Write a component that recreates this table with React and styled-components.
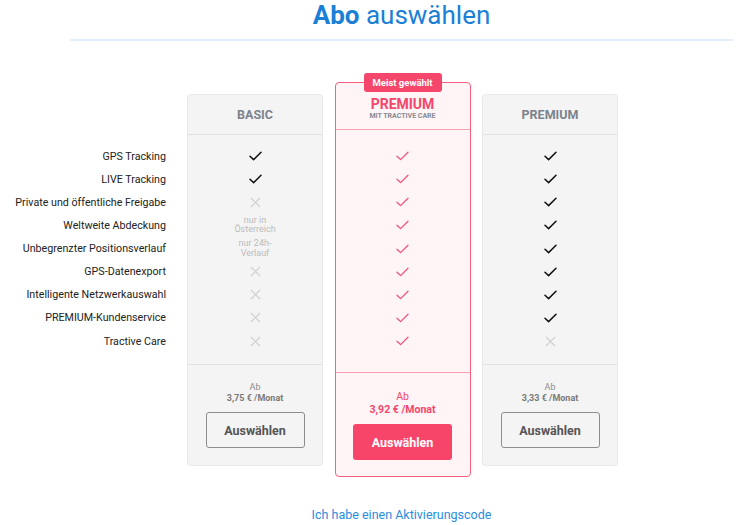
import React from "react";
import styled, { createGlobalStyle, css } from "styled-components";

const Global = createGlobalStyle`
  html, body { margin: 0; padding: 0; background: #fff; }
  body { font-family: Roboto, "Liberation Sans", Arial, sans-serif; -webkit-font-smoothing: antialiased; }
  * { box-sizing: border-box; }
`;

const Page = styled.div`
  width: 738px;
  height: 525px;
  overflow: hidden;
`;

const Head = styled.header`
  margin-left: 70px;
  width: 663px;
  text-align: center;
`;

const Title = styled.h1`
  margin: 0;
  font-size: 26px;
  line-height: 30px;
  font-weight: 400;
  color: #1a80d6;
  b { font-weight: 700; }
`;

const Rule = styled.div`
  margin-top: 9px;
  height: 2px;
  background: #e3effa;
`;

const Main = styled.main`
  display: flex;
  align-items: flex-start;
  gap: 21px;
  margin-top: 41px;
`;

const Labels = styled.ul`
  list-style: none;
  margin: 0;
  padding: 62.5px 0 0;
  width: 166px;
`;

const Row = styled.li`
  height: 23.125px;
  display: flex;
  align-items: center;
  justify-content: ${(p) => (p.$label ? "flex-end" : "center")};
  font-size: 10.7px;
  color: #222;
  white-space: nowrap;
`;

const Cards = styled.div`
  display: flex;
  align-items: flex-start;
  gap: 11.5px;
`;

const Card = styled.section`
  position: relative;
  width: 136px;
  border-radius: 4px;
  display: flex;
  flex-direction: column;
  ${(p) =>
    p.$hot
      ? css`
          height: 395px;
          background: #fff4f6;
          border: 1px solid #f85f7e;
        `
      : css`
          height: 372px;
          margin-top: 12px;
          background: #f4f4f4;
          border: 1px solid #e9e9e9;
        `}
`;

const Badge = styled.div`
  position: absolute;
  top: -10px;
  left: 50%;
  transform: translateX(-50%);
  width: 78px;
  height: 19px;
  border-radius: 3px;
  background: #f5466b;
  color: #fff;
  font-size: 9.5px;
  font-weight: 700;
  line-height: 19px;
  text-align: center;
  white-space: nowrap;
`;

const CardHead = styled.div`
  text-align: center;
  ${(p) =>
    p.$hot
      ? css`
          height: 47px;
          padding-top: 13.5px;
          border-bottom: 1px solid #f6a0b1;
        `
      : css`
          height: 40px;
          border-bottom: 1px solid #e2e2e2;
          display: flex;
          align-items: center;
          justify-content: center;
        `}
`;

const PlanName = styled.div`
  font-weight: 700;
  ${(p) =>
    p.$hot
      ? css`
          font-size: 14px;
          line-height: 15px;
          color: #f5466b;
        `
      : css`
          font-size: 12.5px;
          line-height: 15px;
          color: #7b838c;
        `}
`;

const PlanSub = styled.div`
  font-size: 7px;
  line-height: 8px;
  font-weight: 700;
  color: #868b92;
`;

const Body = styled.ul`
  list-style: none;
  margin: 0;
  ${(p) =>
    p.$hot
      ? css`
          padding: 14.5px 0 19.4px;
          border-bottom: 1px solid #f6a0b1;
        `
      : css`
          padding: 9.5px 0 11.5px;
          border-bottom: 1px solid #e2e2e2;
        `}
`;

const Note = styled.span`
  font-size: 9px;
  line-height: 9.5px;
  color: #bbbbbb;
  text-align: center;
  white-space: pre-line;
`;

const Foot = styled.div`
  display: flex;
  flex-direction: column;
  align-items: center;
  padding-top: 16.5px;
`;

const From = styled.div`
  ${(p) =>
    p.$hot
      ? css`
          font-size: 10.5px;
          line-height: 13px;
          color: #f5466b;
        `
      : css`
          font-size: 9px;
          line-height: 11px;
          color: #8c8c8c;
        `}
`;

const Price = styled.div`
  font-weight: 700;
  ${(p) =>
    p.$hot
      ? css`
          font-size: 10.5px;
          line-height: 14px;
          color: #f5466b;
        `
      : css`
          font-size: 9px;
          line-height: 11px;
          color: #7a7a7a;
        `}
`;

const Button = styled.button`
  width: 99px;
  height: 36px;
  border-radius: 3px;
  font-family: inherit;
  font-size: 12.5px;
  font-weight: 700;
  cursor: pointer;
  ${(p) =>
    p.$hot
      ? css`
          margin-top: 7.5px;
          background: #f7456a;
          border: none;
          color: #fff;
        `
      : css`
          margin-top: 8.5px;
          background: transparent;
          border: 1px solid #8d8d8d;
          color: #555;
        `}
`;

const Link = styled.a`
  display: block;
  margin-top: 29.5px;
  font-size: 12.5px;
  line-height: 15px;
  color: #2a8de0;
  text-decoration: none;
`;

const Check = ({ hot }) => (
  <svg width="13" height="10" viewBox="0 0 13 10" fill="none">
    <path
      d="M1 5.2 L4.6 8.6 L12 1.2"
      stroke={hot ? "#f0557a" : "#111"}
      strokeWidth={hot ? 1.3 : 1.5}
      strokeLinecap="round"
      strokeLinejoin="round"
    />
  </svg>
);

const Cross = () => (
  <svg width="11" height="11" viewBox="0 0 11 11" fill="none">
    <path d="M1 1 L10 10 M10 1 L1 10" stroke="#cfcfcf" strokeWidth="1.1" />
  </svg>
);

const features = [
  "GPS Tracking",
  "LIVE Tracking",
  "Private und öffentliche Freigabe",
  "Weltweite Abdeckung",
  "Unbegrenzter Positionsverlauf",
  "GPS-Datenexport",
  "Intelligente Netzwerkauswahl",
  "PREMIUM-Kundenservice",
  "Tractive Care",
];

const plans = [
  {
    name: "BASIC",
    price: "3,75 € /Monat",
    cells: [1, 1, 0, "nur in\nÖsterreich", "nur 24h-\nVerlauf", 0, 0, 0, 0],
  },
  {
    name: "PREMIUM",
    sub: "MIT TRACTIVE CARE",
    hot: true,
    price: "3,92 € /Monat",
    cells: [1, 1, 1, 1, 1, 1, 1, 1, 1],
  },
  {
    name: "PREMIUM",
    price: "3,33 € /Monat",
    cells: [1, 1, 1, 1, 1, 1, 1, 1, 0],
  },
];

const Cell = ({ v, hot }) => {
  if (v === 1) return <Check hot={hot} />;
  if (v === 0) return <Cross />;
  return <Note>{v}</Note>;
};

export default function App() {
  return (
    <Page>
      <Global />
      <Head>
        <Title>
          <b>Abo</b> auswählen
        </Title>
        <Rule />
      </Head>
      <Main>
        <Labels>
          {features.map((f) => (
            <Row key={f} $label>
              {f}
            </Row>
          ))}
        </Labels>
        <Cards>
          {plans.map((p, i) => (
            <Card key={i} $hot={p.hot}>
              {p.hot && <Badge>Meist gewählt</Badge>}
              <CardHead $hot={p.hot}>
                <PlanName $hot={p.hot}>{p.name}</PlanName>
                {p.sub && <PlanSub>{p.sub}</PlanSub>}
              </CardHead>
              <Body $hot={p.hot}>
                {p.cells.map((c, j) => (
                  <Row key={j}>
                    <Cell v={c} hot={p.hot} />
                  </Row>
                ))}
              </Body>
              <Foot>
                <From $hot={p.hot}>Ab</From>
                <Price $hot={p.hot}>{p.price}</Price>
                <Button $hot={p.hot}>Auswählen</Button>
              </Foot>
            </Card>
          ))}
        </Cards>
      </Main>
      <Head>
        <Link href="#">Ich habe einen Aktivierungscode</Link>
      </Head>
    </Page>
  );
}
